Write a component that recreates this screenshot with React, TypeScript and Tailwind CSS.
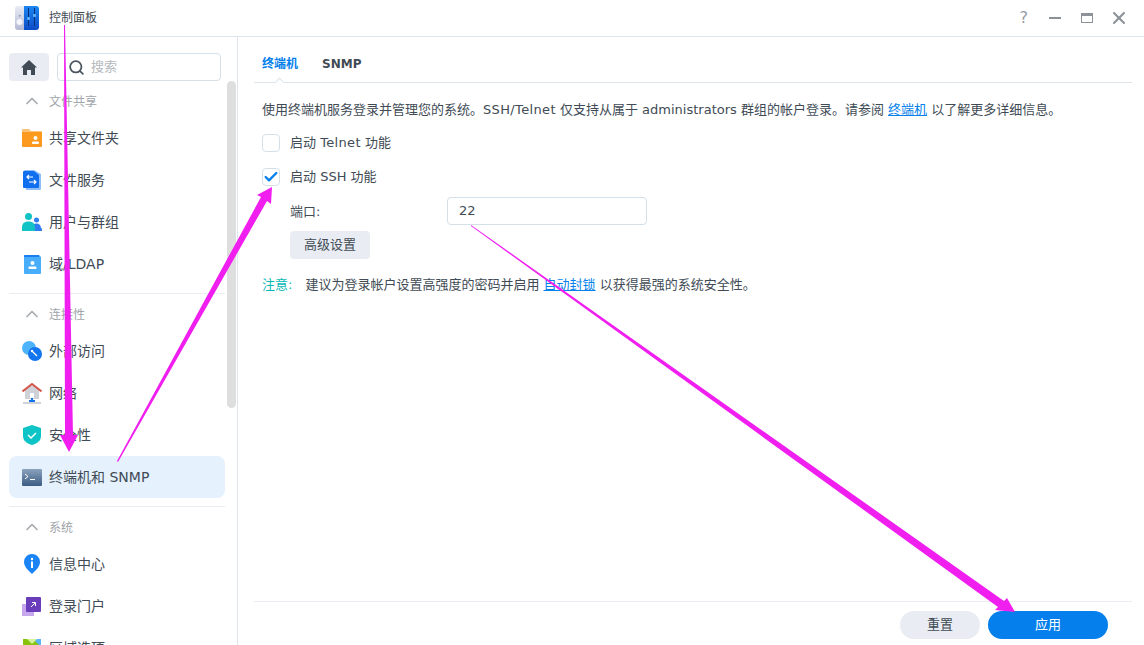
import type { ReactNode } from "react";
import { Search, ChevronUp, Check, X } from "lucide-react";

const FONT = "font-['DejaVu_Sans','Noto_Sans_CJK_SC',sans-serif]";

function AppIcon() {
  return (
    <svg width="24" height="24" viewBox="0 0 24 24">
      <defs>
        <linearGradient id="panel" x1="0" y1="0" x2="0" y2="1">
          <stop offset="0" stopColor="#e9ebf5" />
          <stop offset="1" stopColor="#b4b9d4" />
        </linearGradient>
        <linearGradient id="blue" x1="0" y1="0" x2="0" y2="1">
          <stop offset="0" stopColor="#1c86f2" />
          <stop offset="1" stopColor="#0c4cc6" />
        </linearGradient>
      </defs>
      <path d="M0 3a3 3 0 0 1 3-3h7v24H3a3 3 0 0 1-3-3z" fill="url(#panel)" />
      <path d="M9 0h12a3 3 0 0 1 3 3v18a3 3 0 0 1-3 3H9z" fill="url(#blue)" />
      <circle cx="4.500" cy="16" r="3" fill="#f4f5fa" />
      <rect x="4" y="9" width="1.500" height="1.500" fill="#8b90ab" />
      <path d="M13.500 2v18M19.500 2v18" stroke="#0a2f78" strokeWidth="1" />
      <rect x="12" y="11" width="3" height="3" rx="1" fill="#58b0ff" />
      <rect x="18" y="8" width="3" height="3" rx="1" fill="#58b0ff" />
    </svg>
  );
}

function HomeGlyph() {
  return (
    <svg width="16" height="15" viewBox="0 0 16 15">
      <path d="M8 0 16 7.500H14V15H10V10H6V15H2V7.500H0z" fill="#414b55" />
    </svg>
  );
}

function FolderIcon() {
  return (
    <svg width="20" height="18" viewBox="0 0 20 18">
      <path d="M0 1a1 1 0 0 1 1-1h6l2 2h10a1 1 0 0 1 1 1v2H0z" fill="#fbc27a" />
      <path d="M0 3h20v14a1 1 0 0 1-1 1H1a1 1 0 0 1-1-1z" fill="#fb9a1e" />
      <circle cx="13.500" cy="9" r="2" fill="#fff" />
      <rect x="10" y="12.500" width="7" height="2.500" rx="1" fill="#fff" />
    </svg>
  );
}

function FileServiceIcon() {
  return (
    <svg width="18" height="20" viewBox="0 0 18 20">
      <path d="M1 1a1 1 0 0 1 1-1h9l7 4v15a1 1 0 0 1-1 1H3z" fill="#8fbdf7" />
      <path d="M0 2a1 1 0 0 1 1-1h10l5 4v12a1 1 0 0 1-1 1H1a1 1 0 0 1-1-1z" fill="#0f6fee" />
      <path d="M10 7H4m2-2L4 7l2 2M6 12h7m-2-2 2 2-2 2" stroke="#fff" strokeWidth="1.200" fill="none" />
    </svg>
  );
}

function UsersIcon() {
  return (
    <svg width="20" height="18" viewBox="0 0 20 18">
      <circle cx="14.500" cy="7" r="2.500" fill="#2f7df0" />
      <path d="M10 18v-3a4 4 0 0 1 9 0c1 0 1 1 1 3z" fill="#2f7df0" />
      <circle cx="6.500" cy="3.500" r="3.500" fill="#12c2c4" />
      <path d="M0 18v-3.500C0 10 3 8.500 6.500 8.500S13 10 13 14.500V18z" fill="#12c2c4" />
    </svg>
  );
}

function DomainIcon() {
  return (
    <svg width="17" height="19" viewBox="0 0 17 19">
      <path d="M0 1a1 1 0 0 1 1-1h14l2 2v16a1 1 0 0 1-1 1H1a1 1 0 0 1-1-1z" fill="#48aefc" />
      <path d="M0 1a1 1 0 0 1 1-1h14v2H0z" fill="#1a7df0" />
      <circle cx="8.500" cy="8" r="2" fill="#fff" />
      <rect x="4.500" y="11.500" width="8" height="2.500" rx="1" fill="#fff" />
    </svg>
  );
}

function ExternalIcon() {
  return (
    <svg width="20" height="20" viewBox="0 0 20 20">
      <circle cx="7" cy="7" r="7" fill="#4fb3fb" />
      <circle cx="13" cy="13" r="7" fill="#1476ee" />
      <path d="M10 10l5 5" stroke="#fff" strokeWidth="1.200" />
      <circle cx="10" cy="10" r="1.200" fill="#fff" />
    </svg>
  );
}

function NetworkIcon() {
  return (
    <svg width="20" height="21" viewBox="0 0 20 21">
      <path d="M3 7 10 2l7 5v9H3z" fill="#cfd2d6" />
      <rect x="8" y="10" width="4" height="5" fill="#fff" />
      <path d="M0.500 8.500 10 1l9.500 7.500" stroke="#d2574a" strokeWidth="2" fill="none" />
      <path d="M10 15v4" stroke="#1476ee" strokeWidth="2" />
      <path d="M7 17h6v2H7z" fill="#1476ee" />
      <path d="M1 19h18v2H1z" fill="#cfd2d6" />
    </svg>
  );
}

function ShieldIcon() {
  return (
    <svg width="18" height="20" viewBox="0 0 18 20">
      <path d="M9 0l9 3v8c0 5-4 7.500-9 9-5-1.500-9-4-9-9V3z" fill="#0fc4c6" />
      <path d="M5 10l3 3 5-5" stroke="#fff" strokeWidth="1.500" fill="none" />
    </svg>
  );
}

function TerminalIcon() {
  return (
    <svg width="20" height="17" viewBox="0 0 20 17">
      <defs>
        <linearGradient id="term" x1="0" y1="0" x2="0" y2="1">
          <stop offset="0" stopColor="#8aa2bd" />
          <stop offset="1" stopColor="#3d5d84" />
        </linearGradient>
      </defs>
      <rect width="20" height="17" rx="1" fill="url(#term)" />
      <path d="M3 5l3 2.500L3 10" stroke="#fff" strokeWidth="1" fill="none" />
      <path d="M8 10.500h5" stroke="#fff" strokeWidth="1" />
    </svg>
  );
}

function InfoIcon() {
  return (
    <svg width="16" height="20" viewBox="0 0 16 20">
      <path d="M8 20C5 17 0 13 0 8a8 8 0 0 1 16 0c0 5-5 9-8 12z" fill="#1a84f4" />
      <circle cx="8" cy="5" r="1.200" fill="#fff" />
      <rect x="7" y="7.500" width="2" height="6.500" fill="#fff" />
    </svg>
  );
}

function PortalIcon() {
  return (
    <svg width="20" height="19" viewBox="0 0 20 19">
      <rect y="7" width="12" height="12" fill="#c6a7ee" />
      <rect x="4" width="15" height="15" rx="1" fill="#6a3dbb" />
      <path d="M9 10l4-4M10 5.500h3.500V9" stroke="#fff" strokeWidth="1" fill="none" />
    </svg>
  );
}

function RegionalIcon() {
  return (
    <svg width="18" height="18" viewBox="0 0 18 18">
      <rect width="18" height="18" fill="#86c40e" />
      <path d="M10 0h8v8z" fill="#5cb4f5" />
      <path d="M4 0l5 5 5-5z" fill="#d6f29a" />
    </svg>
  );
}

function NavItem({ icon, label, active }: { icon: ReactNode; label: string; active?: boolean }) {
  return (
    <div className={`flex h-[42px] items-center rounded-lg ${active ? "bg-[#e5f1fd]" : ""}`}>
      <div className="flex w-[40px] shrink-0 items-center justify-center pl-[13px] pr-[7px]">{icon}</div>
      <span className="text-[14px] text-[#414b55]">{label}</span>
    </div>
  );
}

function SectionHead({ label }: { label: string }) {
  return (
    <div className="mb-[2px] flex h-[28px] items-center">
      <div className="flex w-[40px] justify-center pl-[6px]">
        <ChevronUp size={20} strokeWidth={2} className="text-[#a6abb0]" />
      </div>
      <span className="mt-[2px] text-[12px] text-[#a0a5aa]">{label}</span>
    </div>
  );
}

function Sidebar() {
  return (
    <aside className="relative h-full w-[238px] shrink-0 overflow-hidden border-r border-[#dde4ec] pt-4 pl-[9px]">
      <div className="flex h-[28px] gap-2">
        <div className="flex w-[40px] items-center justify-center rounded-[4px] bg-[#e9edf3]">
          <HomeGlyph />
        </div>
        <div className="flex w-[164px] items-center rounded-[4px] border border-[#d3dfe9] pl-[10px]">
          <Search size={17} strokeWidth={2.500} className="text-[#4a5560]" />
          <span className="ml-[6px] text-[13px] text-[#b5b9bd]">搜索</span>
        </div>
      </div>

      <div className="w-[216px]">
        <div className="border-b border-[#e9ecf1] pt-[6px] pb-2">
          <SectionHead label="文件共享" />
          <NavItem icon={<FolderIcon />} label="共享文件夹" />
          <NavItem icon={<FileServiceIcon />} label="文件服务" />
          <NavItem icon={<UsersIcon />} label="用户与群组" />
          <NavItem icon={<DomainIcon />} label="域/LDAP" />
        </div>
        <div className="border-b border-[#e9ecf1] pt-[6px] pb-2">
          <SectionHead label="连接性" />
          <NavItem icon={<ExternalIcon />} label="外部访问" />
          <NavItem icon={<NetworkIcon />} label="网络" />
          <NavItem icon={<ShieldIcon />} label="安全性" />
          <NavItem icon={<TerminalIcon />} label="终端机和 SNMP" active />
        </div>
        <div className="pt-[6px]">
          <SectionHead label="系统" />
          <NavItem icon={<InfoIcon />} label="信息中心" />
          <NavItem icon={<PortalIcon />} label="登录门户" />
          <NavItem icon={<RegionalIcon />} label="区域选项" />
        </div>
      </div>

      <div className="absolute top-[44px] left-[227px] h-[327px] w-[9px] rounded-full bg-[#dedede]" />
    </aside>
  );
}

function CheckRow({ label, checked }: { label: ReactNode; checked?: boolean }) {
  return (
    <div className="flex h-[18px] items-center gap-[10px]">
      <div className="flex h-[18px] w-[18px] items-center justify-center rounded-[4px] border border-[#d3dfe9]">
        {checked && <Check size={18} strokeWidth={3.500} className="text-[#057feb]" />}
      </div>
      <span className="text-[13px] text-[#414b55]">{label}</span>
    </div>
  );
}

function Content() {
  return (
    <main className="flex h-full min-w-0 flex-1 flex-col pl-[16px] pr-[12px]">
      <div className="relative flex h-[46px] shrink-0 items-center gap-[24px] border-b border-[#dde4ec] pt-[8px] pl-[8px]">
        <span className="text-[12px] font-bold text-[#057feb]">终端机</span>
        <span className="text-[12px] font-bold text-[#414b55]">SNMP</span>
        <div className="absolute -bottom-[4px] left-[22px] h-[7px] w-[7px] rotate-45 border-t border-l border-[#dde4ec] bg-white" />
      </div>

      <div className="flex-1 pt-[18px] pl-[8px] text-[13px] text-[#414b55]">
        <p className="h-[18px] leading-[18px] whitespace-nowrap">
          使用终端机服务登录并管理您的系统。<span className="tracking-[0.35px]">SSH/Telnet</span> 仅支持从属于 administrators 群组的帐户登录。请参阅{" "}
          <span className="text-[#057feb] underline">终端机</span> 以了解更多详细信息。
        </p>
        <div className="mt-[15px] flex flex-col gap-[16px]">
          <CheckRow label={<>启动 <span className="tracking-[0.35px]">Telnet</span> 功能</>} />
          <CheckRow label="启动 SSH 功能" checked />
        </div>
        <div className="mt-[11px] ml-[28px]">
          <div className="flex h-[28px] items-center">
            <span className="mt-[2px] w-[157px]">端口:</span>
            <div className="flex h-[28px] w-[200px] items-center rounded-[4px] border border-[#d3dfe9] pl-[11px]">22</div>
          </div>
          <div className="mt-[6px] flex h-[28px] w-[80px] items-center justify-center rounded-[4px] bg-[#e9edf3]">高级设置</div>
        </div>
        <p className="mt-[17px] h-[18px] leading-[18px] whitespace-nowrap">
          <span className="text-[#0bb8b8]">注意:</span>
          <span className="ml-[13px]">建议为登录帐户设置高强度的密码并启用 </span>
          <span className="text-[#057feb] underline">自动封锁</span> 以获得最强的系统安全性。
        </p>
      </div>

      <div className="flex h-[44px] shrink-0 items-start justify-end gap-[8px] border-t border-[#e9ecf1] pt-[9px] pr-[24px] text-[13px]">
        <div className="flex h-[28px] w-[80px] items-center justify-center rounded-full bg-[#e9edf3] text-[#414b55]">重置</div>
        <div className="flex h-[28px] w-[120px] items-center justify-center rounded-full bg-[#057feb] text-white">应用</div>
      </div>
    </main>
  );
}

function Arrows() {
  return (
    <svg className="pointer-events-none absolute inset-0" width="1144" height="645" viewBox="0 0 1144 645">
      <g fill="#f01ff0">
        <polygon points="64,25 65,25 73,435 78,435 69,452 60,435 65,435" />
        <polygon points="117,461 261,197 257,195 272,187 271,204 267,201 118,462" />
        <polygon points="471,225 1004,601 1007,598 1015,612 995,610 998,607 471,226" />
      </g>
    </svg>
  );
}

export default function App() {
  return (
    <div className={`relative flex h-[645px] w-[1144px] flex-col overflow-hidden bg-white ${FONT}`}>
      <header className="flex h-[37px] shrink-0 items-center border-b border-[#dde4ec] pl-[15px]">
        <AppIcon />
        <span className="ml-[10px] text-[12px] text-[#414b55]">控制面板</span>
        <div className="ml-auto flex items-center pr-[15px] text-[#8d9299]">
          <span className="mr-[21px] text-[16px] text-[#969ba1]">?</span>
          <div className="mr-[20px] h-[2px] w-[12px] bg-[#8d9299]" />
          <div className="mr-[16px] h-[10px] w-[12px] border border-t-[3px] border-[#8d9299]" />
          <X size={20} strokeWidth={2.500} />
        </div>
      </header>
      <div className="flex min-h-0 flex-1">
        <Sidebar />
        <Content />
      </div>
      <Arrows />
    </div>
  );
}
